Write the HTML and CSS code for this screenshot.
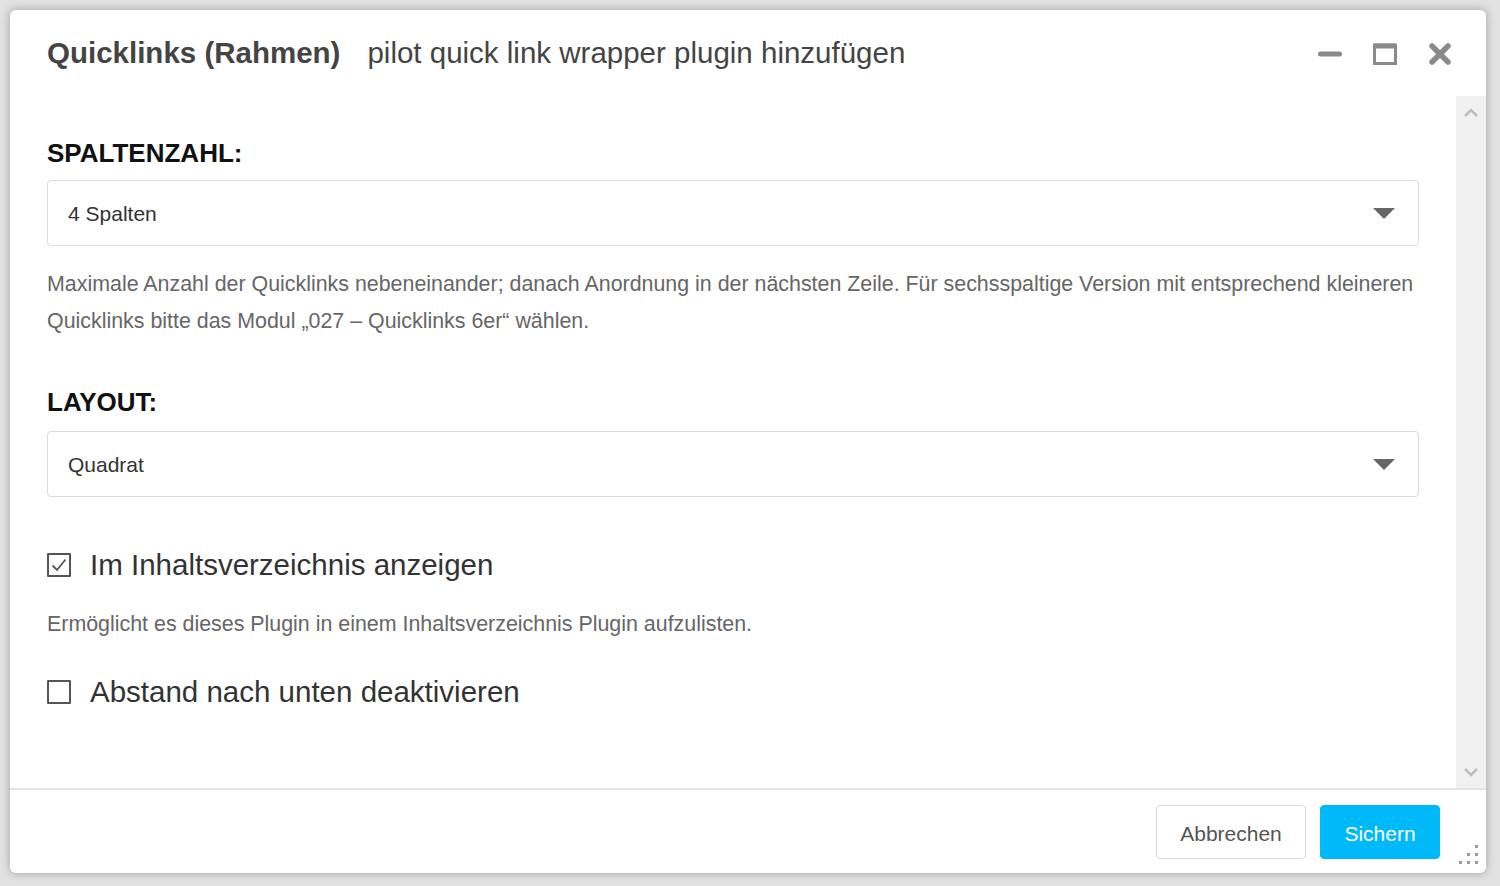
FILE: index.html
```html
<!DOCTYPE html>
<html lang="de">
<head>
<meta charset="UTF-8" />
<title>Quicklinks (Rahmen)</title>
<link rel="stylesheet" href="styles.css">
</head>
<body>

<div class="dialog" role="dialog" aria-labelledby="dialog-title">
  <div class="dialog-header">
    <h1 class="dialog-title" id="dialog-title">Quicklinks (Rahmen)</h1>
    <span class="dialog-subtitle">pilot quick link wrapper plugin hinzufügen</span>
    <div class="window-controls">
      <button class="win-btn" aria-label="Minimieren">
        <svg width="24" height="24" viewBox="0 0 24 24"><line x1="2.5" y1="12" x2="21.5" y2="12" stroke="#8a8a8a" stroke-width="5" stroke-linecap="round"/></svg>
      </button>
      <button class="win-btn" aria-label="Maximieren">
        <svg width="24" height="24" viewBox="0 0 24 24"><rect x="1.5" y="3" width="21" height="18.5" fill="none" stroke="#8a8a8a" stroke-width="3"/><rect x="1.5" y="1.5" width="21" height="5" fill="#8a8a8a"/></svg>
      </button>
      <button class="win-btn" aria-label="Schließen">
        <svg width="24" height="24" viewBox="0 0 24 24"><path d="M4 4 L20 20 M20 4 L4 20" stroke="#8a8a8a" stroke-width="5.5" stroke-linecap="round"/></svg>
      </button>
    </div>
  </div>

  <div class="dialog-body">
    <div class="dialog-content">
      <label class="field-label">SPALTENZAHL:</label>
      <div class="select">
        <span>4 Spalten</span>
        <svg class="select-arrow" width="22" height="11" viewBox="0 0 22 11"><path d="M0 0 H22 L11 11 Z" fill="#666"/></svg>
      </div>
      <p class="help-text">Maximale Anzahl der Quicklinks nebeneinander; danach Anordnung in der nächsten Zeile. Für sechsspaltige Version mit entsprechend kleineren Quicklinks bitte das Modul „027 – Quicklinks 6er“ wählen.</p>

      <label class="field-label layout-label">LAYOUT:</label>
      <div class="select">
        <span>Quadrat</span>
        <svg class="select-arrow" width="22" height="11" viewBox="0 0 22 11"><path d="M0 0 H22 L11 11 Z" fill="#666"/></svg>
      </div>

      <label class="check-row first-check">
        <span class="checkbox checked">
          <svg width="20" height="20" viewBox="0 0 20 20"><path d="M3.5 10.5 L8 15 L16.5 4.5" fill="none" stroke="#555" stroke-width="1.8"/></svg>
        </span>
        <span class="check-label">Im Inhaltsverzeichnis anzeigen</span>
      </label>
      <p class="help-text help-check">Ermöglicht es dieses Plugin in einem Inhaltsverzeichnis Plugin aufzulisten.</p>

      <label class="check-row second-check">
        <span class="checkbox"></span>
        <span class="check-label">Abstand nach unten deaktivieren</span>
      </label>
    </div>

    <div class="scrollbar">
      <svg width="16" height="10" viewBox="0 0 16 10"><path d="M2 8 L8 2 L14 8" fill="none" stroke="#bdbdbd" stroke-width="2.5"/></svg>
      <svg width="16" height="10" viewBox="0 0 16 10"><path d="M2 2 L8 8 L14 2" fill="none" stroke="#bdbdbd" stroke-width="2.5"/></svg>
    </div>
  </div>

  <div class="dialog-footer">
    <button class="btn btn-default">Abbrechen</button>
    <button class="btn btn-primary">Sichern</button>
  </div>

  <svg class="resize-grip" width="19" height="19" viewBox="0 0 19 19">
    <rect x="16" y="0" width="3" height="3" fill="#999"/>
    <rect x="8" y="8" width="3" height="3" fill="#999"/>
    <rect x="16" y="8" width="3" height="3" fill="#999"/>
    <rect x="0" y="16" width="3" height="3" fill="#999"/>
    <rect x="8" y="16" width="3" height="3" fill="#999"/>
    <rect x="16" y="16" width="3" height="3" fill="#999"/>
  </svg>
</div>

</body>
</html>
```

FILE: styles.css
```css
/* Reset and base */
* {
  box-sizing: border-box;
  margin: 0;
  padding: 0;
}
html, body {
  height: 100%;
}
body {
  font-family: 'Liberation Sans', Arial, sans-serif;
  background: #e2e2e2;
  color: #333;
  padding: 10px 14px 13px 10px;
  overflow: hidden;
}

/* Dialog window */
.dialog {
  position: relative;
  height: 863px;
  background: #fff;
  border-radius: 6px;
  box-shadow: 0 0 10px rgba(0, 0, 0, 0.3);
  display: flex;
  flex-direction: column;
}

.dialog-header {
  height: 86px;
  flex: 0 0 auto;
  display: flex;
  align-items: center;
  padding: 0 34px 0 37px;
}

.dialog-title {
  font-size: 29.5px;
  line-height: 36px;
  font-weight: 700;
  color: #444;
}

.dialog-subtitle {
  font-size: 29.5px;
  line-height: 36px;
  color: #444;
  margin-left: 27px;
}

.window-controls {
  margin-left: auto;
  display: flex;
  gap: 31px;
  padding-top: 2px;
}

.win-btn {
  width: 24px;
  height: 24px;
  border: none;
  background: none;
  cursor: pointer;
}
.win-btn svg {
  display: block;
}

/* Body with scroll area */
.dialog-body {
  flex: 1 1 auto;
  display: flex;
  min-height: 0;
}

.dialog-content {
  flex: 1 1 auto;
  padding: 42px 37px 0 37px;
}

.field-label {
  display: block;
  font-size: 26px;
  line-height: 30px;
  font-weight: 700;
  color: #111;
  margin-bottom: 12px;
}
.layout-label {
  margin-top: 47px;
  margin-bottom: 14px;
}

.select {
  height: 66px;
  border: 1px solid #dcdcdc;
  border-radius: 4px;
  display: flex;
  align-items: center;
  justify-content: space-between;
  padding: 2px 23px 0 20px;
  font-size: 21px;
  color: #333;
}
.select-arrow {
  margin-top: -2px;
}

.help-text {
  font-size: 21.4px;
  line-height: 37px;
  color: #666;
  margin-top: 20px;
}
.help-check {
  margin-top: 21px;
}

/* Checkboxes */
.check-row {
  display: flex;
  align-items: center;
  height: 40px;
  cursor: pointer;
}
.first-check {
  margin-top: 48px;
}
.second-check {
  margin-top: 29px;
}

.checkbox {
  width: 24px;
  height: 24px;
  border: 2px solid #555;
  border-radius: 1px;
  display: flex;
  align-items: center;
  justify-content: center;
  flex: 0 0 auto;
}
.checkbox svg {
  display: block;
}

.check-label {
  font-size: 29.5px;
  color: #333;
  margin-left: 19px;
}

.scrollbar {
  width: 30px;
  flex: 0 0 auto;
  background: #f1f1f1;
  display: flex;
  flex-direction: column;
  justify-content: space-between;
  align-items: center;
  padding: 12px 0 11px;
}
.scrollbar svg {
  display: block;
}

/* Footer */
.dialog-footer {
  flex: 0 0 auto;
  border-top: 2px solid #e3e3e3;
  display: flex;
  justify-content: flex-end;
  gap: 14px;
  padding: 15px 46px 14px 0;
}

.btn {
  height: 54px;
  padding-top: 3px;
  font-family: inherit;
  font-size: 21px;
  border-radius: 4px;
  cursor: pointer;
}
.btn-default {
  width: 150px;
  background: #fff;
  border: 1px solid #d8d8d8;
  color: #555;
}
.btn-primary {
  width: 120px;
  background: #00b9f8;
  border: 1px solid #00b9f8;
  color: #fff;
}

.resize-grip {
  position: absolute;
  right: 8px;
  bottom: 9px;
}
```
